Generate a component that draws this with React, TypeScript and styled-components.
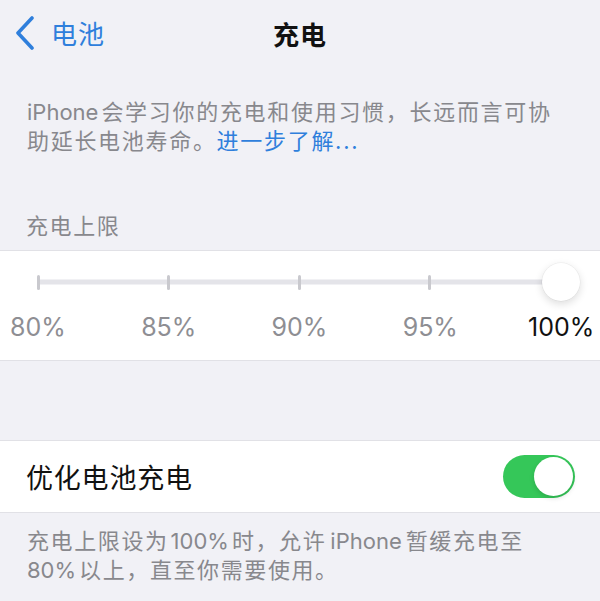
import React from "react";
import styled, { createGlobalStyle } from "styled-components";

const GlobalStyle = createGlobalStyle`
  html, body {
    margin: 0;
    padding: 0;
    background: #f1f1f6;
  }
  body {
    font-family: "Inter", "Noto Sans CJK SC", sans-serif;
    -webkit-font-smoothing: antialiased;
  }
`;

const Screen = styled.div`
  width: 600px;
  height: 601px;
  overflow: hidden;
  background: #f1f1f6;
  display: flex;
  flex-direction: column;
`;

const NavBar = styled.header`
  position: relative;
  height: 66px;
  display: flex;
  align-items: center;
  padding-left: 15px;
`;

const BackButton = styled.button`
  display: flex;
  align-items: center;
  gap: 16px;
  border: 0;
  background: none;
  padding: 0;
  color: #2f7fdc;
  font-family: "Noto Sans CJK SC", sans-serif;
  font-size: 26px;
  line-height: 1;
  letter-spacing: 1px;
  cursor: pointer;
`;

const NavTitle = styled.h1`
  position: absolute;
  left: 0;
  right: 0;
  top: 0;
  height: 66px;
  margin: 0;
  display: flex;
  align-items: center;
  justify-content: center;
  font-family: "Noto Sans CJK SC", sans-serif;
  font-size: 26px;
  font-weight: 700;
  letter-spacing: 1px;
  color: #111;
  pointer-events: none;
`;

const Note = styled.p<{ $top?: number; $spacing: number }>`
  margin: ${(p) => p.$top ?? 0}px 0 0;
  padding: 0 10px 0 27px;
  font-size: 22px;
  line-height: 28.5px;
  letter-spacing: ${(p) => p.$spacing}px;
  white-space: nowrap;
  color: #88888d;
`;

const Latin = styled.span<{ $gap?: string }>`
  letter-spacing: 0;
  margin: ${(p) => p.$gap ?? "0"};
`;

const Link = styled.a`
  color: #2f7fdc;
  text-decoration: none;
`;

const SectionHeader = styled.h2`
  margin: 55px 0 12px;
  padding-left: 26px;
  font-family: "Noto Sans CJK SC", sans-serif;
  font-size: 22px;
  line-height: 28px;
  font-weight: 400;
  letter-spacing: 1.6px;
  color: #88888d;
`;

const Card = styled.section<{ $height: number }>`
  height: ${(p) => p.$height}px;
  box-sizing: border-box;
  background: #fff;
  border-top: 1px solid #e1e1e6;
  border-bottom: 1px solid #e1e1e6;
`;

const SliderCard = styled(Card)`
  display: flex;
  flex-direction: column;
  padding-top: 12px;
`;

const Track = styled.div`
  position: relative;
  height: 38px;
  margin: 0 39px 0 37px;
  display: flex;
  align-items: center;
  justify-content: space-between;

  &::before {
    content: "";
    position: absolute;
    left: 0;
    right: 0;
    top: 50%;
    height: 5px;
    transform: translateY(-50%);
    background: #e4e4e9;
    border-radius: 3px;
  }
`;

const Tick = styled.span`
  position: relative;
  width: 3px;
  height: 15px;
  border-radius: 1.5px;
  background: #c9c9ce;
`;

const Thumb = styled.span`
  position: absolute;
  right: -19px;
  top: 0;
  width: 38px;
  height: 38px;
  border-radius: 50%;
  background: #fff;
  box-shadow: 0 3px 8px rgba(0, 0, 0, 0.14), 0 0 0 0.5px rgba(0, 0, 0, 0.06);
`;

const Labels = styled.div`
  display: flex;
  justify-content: space-between;
  padding: 0 6px 0 5px;
  margin-top: 11px;
`;

const Label = styled.span<{ $active?: boolean }>`
  width: 66px;
  text-align: center;
  font-size: 25px;
  line-height: 30px;
  color: ${(p) => (p.$active ? "#111" : "#8e8e93")};
`;

const Spacer = styled.div`
  height: 79px;
`;

const Row = styled(Card)`
  display: flex;
  align-items: center;
  justify-content: space-between;
  padding: 0 25px 0 26px;
`;

const RowTitle = styled.span`
  font-family: "Noto Sans CJK SC", sans-serif;
  font-size: 27px;
  letter-spacing: 0.8px;
  color: #111;
`;

const Toggle = styled.span<{ $on: boolean }>`
  position: relative;
  width: 72px;
  height: 43px;
  border-radius: 22px;
  background: ${(p) => (p.$on ? "#35c759" : "#e9e9ea")};

  &::after {
    content: "";
    position: absolute;
    top: 2px;
    ${(p) => (p.$on ? "right: 2px;" : "left: 2px;")}
    width: 39px;
    height: 39px;
    border-radius: 50%;
    background: #fff;
    box-shadow: 0 2px 5px rgba(0, 0, 0, 0.15);
  }
`;

const steps = ["80%", "85%", "90%", "95%", "100%"];

export default function App() {
  return (
    <>
      <GlobalStyle />
      <Screen>
        <NavBar>
          <BackButton>
            <svg width="20" height="34" viewBox="0 0 20 34" fill="none">
              <path
                d="M17 2 L3 17 L17 32"
                stroke="#2f7fdc"
                strokeWidth="3.6"
                strokeLinecap="round"
                strokeLinejoin="round"
              />
            </svg>
            电池
          </BackButton>
          <NavTitle>充电</NavTitle>
        </NavBar>

        <Note $top={32} $spacing={1.7}>
          <Latin $gap="0 3px 0 0">iPhone</Latin>会学习你的充电和使用习惯，长远而言可协
          <br />
          助延长电池寿命。<Link href="#">进一步了解...</Link>
        </Note>

        <SectionHeader>充电上限</SectionHeader>
        <SliderCard $height={111}>
          <Track>
            {steps.map((s) => (
              <Tick key={s} />
            ))}
            <Thumb />
          </Track>
          <Labels>
            {steps.map((s, i) => (
              <Label key={s} $active={i === steps.length - 1}>
                {s}
              </Label>
            ))}
          </Labels>
        </SliderCard>

        <Spacer />

        <Row $height={73}>
          <RowTitle>优化电池充电</RowTitle>
          <Toggle $on />
        </Row>

        <Note $top={14} $spacing={1.6}>
          充电上限设为<Latin $gap="0 3px 0 2px">100%</Latin>时，允许<Latin $gap="0 4px">iPhone</Latin>暂缓充电至
          <br />
          <Latin $gap="0 3px 0 0">80%</Latin>以上，直至你需要使用。
        </Note>
      </Screen>
    </>
  );
}
